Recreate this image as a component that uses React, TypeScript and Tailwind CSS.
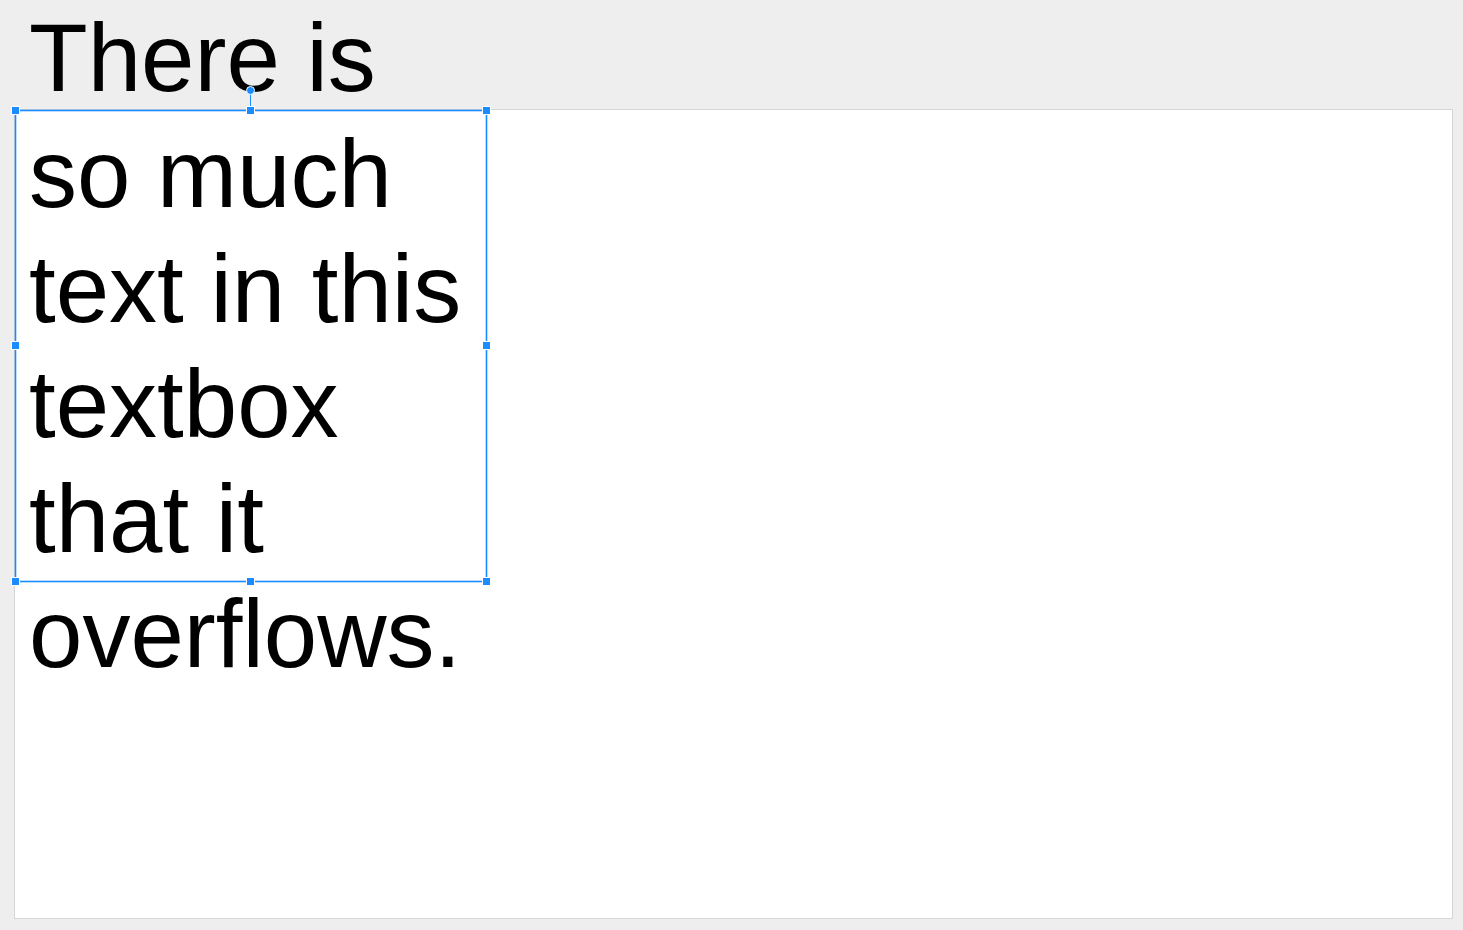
import React from "react";

function Handle({ className }: { className: string }) {
  return <div className={"absolute w-[9px] h-[9px] bg-[#1a8cff] border border-white " + className} />;
}

export default function App() {
  return (
    <div
      className="h-[930px] w-[1463px] bg-[#eeeeee] overflow-hidden pl-[14px] pt-[109px]"
      style={{ fontFamily: '"Liberation Sans", Arial, sans-serif' }}
    >
      <div className="w-[1439px] h-[810px] bg-white border border-[#d6d6d6] flex items-start">
        {/* textbox */}
        <div className="relative w-[472px] h-[472px] flex items-center">
          <div className="w-full pl-[14px] pr-[10px] text-[96px] leading-[1.2] text-black">
            There is so much text in this textbox that it overflows.
          </div>
          {/* selection outline */}
          <div className="absolute inset-0 border border-[#1a8cff] shadow-[0_0_0_1px_rgba(26,140,255,0.3),inset_0_0_0_1px_rgba(26,140,255,0.3)] pointer-events-none">
            <div className="absolute left-[234px] top-[-20px] w-px h-[20px] bg-[#1a8cff]" />
            <div className="absolute left-[230px] top-[-25px] w-[9px] h-[9px] rounded-full bg-[#1a8cff] border border-white" />
            <Handle className="left-[-5px] top-[-5px]" />
            <Handle className="left-[230px] top-[-5px]" />
            <Handle className="right-[-5px] top-[-5px]" />
            <Handle className="right-[-5px] top-[230px]" />
            <Handle className="right-[-5px] bottom-[-5px]" />
            <Handle className="left-[230px] bottom-[-5px]" />
            <Handle className="left-[-5px] bottom-[-5px]" />
            <Handle className="left-[-5px] top-[230px]" />
          </div>
        </div>
      </div>
    </div>
  );
}
